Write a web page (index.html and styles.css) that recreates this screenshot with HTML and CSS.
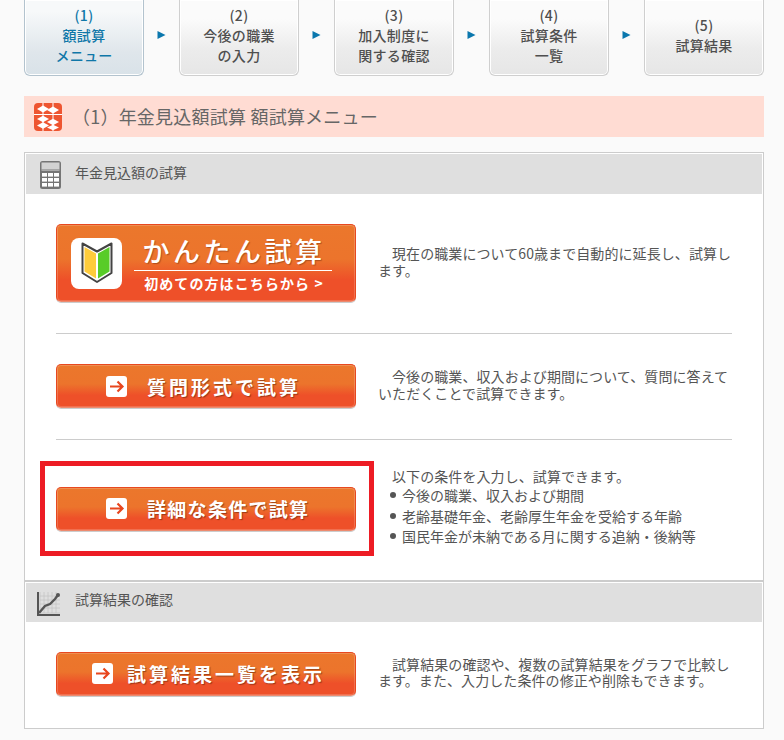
FILE: index.html
```html
<!DOCTYPE html>
<html lang="ja">
<head>
<meta charset="utf-8">
<title>年金見込額試算</title>
<link rel="stylesheet" href="styles.css">
</head>
<body>
<div class="page">
  <ol class="steps">
    <li class="step active"><span>(1)</span><span>額試算</span><span>メニュー</span></li>
    <li class="sep"><svg width="9" height="10" viewBox="0 0 9 10"><path d="M0.5 1 L8.5 5 L0.5 9 Z" fill="#0a77ad"/></svg></li>
    <li class="step"><span>(2)</span><span>今後の職業</span><span>の入力</span></li>
    <li class="sep"><svg width="9" height="10" viewBox="0 0 9 10"><path d="M0.5 1 L8.5 5 L0.5 9 Z" fill="#0a77ad"/></svg></li>
    <li class="step"><span>(3)</span><span>加入制度に</span><span>関する確認</span></li>
    <li class="sep"><svg width="9" height="10" viewBox="0 0 9 10"><path d="M0.5 1 L8.5 5 L0.5 9 Z" fill="#0a77ad"/></svg></li>
    <li class="step"><span>(4)</span><span>試算条件</span><span>一覧</span></li>
    <li class="sep"><svg width="9" height="10" viewBox="0 0 9 10"><path d="M0.5 1 L8.5 5 L0.5 9 Z" fill="#0a77ad"/></svg></li>
    <li class="step"><span>(5)</span><span>試算結果</span></li>
  </ol>

  <h1 class="title">
    <svg class="title-icon" width="28" height="28" viewBox="0 0 28 28">
      <rect width="28" height="28" rx="4" fill="#ee5530"/>
      <path d="M0 11.5H28M9 0V28M19 0V28" stroke="#fff" stroke-width="1"/>
      <g fill="#fff">
        <path d="M3 6 L9 2.5 L15 6 L9 9.5Z"/>
        <path d="M13 7 L19 3.5 L25 7 L19 10.5Z"/>
        <path d="M3 16 L9 12.8 L15 16 L9 19.2Z"/>
        <path d="M3 22.5 L9 19.3 L15 22.5 L9 25.7Z"/>
        <path d="M13 19 L19 15.8 L25 19 L19 22.2Z"/>
        <path d="M13 24.5 L19 21.8 L25 24.5 L19 27.2Z"/>
      </g>
    </svg>
    <span>（1）年金見込額試算 額試算メニュー</span>
  </h1>

  <div class="card">
    <section class="section">
      <h2 class="head">
        <svg class="head-icon calc" width="21" height="28" viewBox="0 0 21 28">
          <rect x="0" y="0" width="21" height="28" rx="2.5" fill="#757575"/>
          <rect x="1.5" y="1.5" width="18" height="7" fill="#d2d2d2"/>
          <rect x="1.5" y="8.5" width="18" height="1.5" fill="#aaa"/>
          <g fill="#fff">
            <rect x="2" y="12" width="5" height="3.6"/><rect x="8" y="12" width="5" height="3.6"/><rect x="14" y="12" width="5" height="3.6"/>
            <rect x="2" y="17" width="5" height="3.6"/><rect x="8" y="17" width="5" height="3.6"/><rect x="14" y="17" width="5" height="3.6"/>
            <rect x="2" y="22" width="5" height="3.6"/><rect x="8" y="22" width="5" height="3.6"/><rect x="14" y="22" width="5" height="3.6"/>
          </g>
        </svg>
        <span>年金見込額の試算</span>
      </h2>
      <div class="rows">
        <div class="row">
          <a class="btn btn-easy">
            <span class="mark">
              <svg width="32" height="42" viewBox="0 0 32 42">
                <path d="M1.5 1.5 L16 9.5 L30.5 1.5 V31 L16 40 L1.5 31Z" fill="#fff" stroke="#444" stroke-width="2" stroke-linejoin="round"/>
                <path d="M3.5 5 L15 11.5 V36.5 L3.5 29.5Z" fill="#ffcc3c"/>
                <path d="M28.5 5 L17 11.5 V36.5 L28.5 29.5Z" fill="#58cc28"/>
              </svg>
            </span>
            <span class="easy-text">
              <span class="easy-main">かんたん試算</span>
              <span class="easy-sub">初めての方はこちらから &gt;</span>
            </span>
          </a>
          <p class="desc">現在の職業について60歳まで自動的に延長し、試算します。</p>
        </div>
        <hr class="rule">
        <div class="row">
          <a class="btn">
            <svg class="arrow" width="21" height="21" viewBox="0 0 21 21"><rect width="21" height="21" rx="3" fill="#fff"/><path d="M4 10.5H16.5M11.5 5.5 L16.5 10.5 L11.5 15.5" fill="none" stroke="#e8461e" stroke-width="2.2"/></svg>
            <span class="label l-question">質問形式で試算</span>
          </a>
          <p class="desc">今後の職業、収入および期間について、質問に答えていただくことで試算できます。</p>
        </div>
        <hr class="rule">
        <div class="row">
          <a class="btn">
            <svg class="arrow" width="21" height="21" viewBox="0 0 21 21"><rect width="21" height="21" rx="3" fill="#fff"/><path d="M4 10.5H16.5M11.5 5.5 L16.5 10.5 L11.5 15.5" fill="none" stroke="#e8461e" stroke-width="2.2"/></svg>
            <span class="label l-detail">詳細な条件で試算</span>
          </a>
          <div class="detail">
            <p class="desc desc-list">以下の条件を入力し、試算できます。</p>
            <ul class="list">
              <li>今後の職業、収入および期間</li>
              <li>老齢基礎年金、老齢厚生年金を受給する年齢</li>
              <li>国民年金が未納である月に関する追納・後納等</li>
            </ul>
          </div>
          <div class="frame"></div>
        </div>
      </div>
    </section>

    <section class="section second">
      <h2 class="head head-second">
        <svg class="head-icon chart" width="23" height="24" viewBox="0 0 23 24">
          <path d="M3 0V21H23M7 0V21M11 0V21M15 0V21M19 0V21M3 4H23M3 8H23M3 12H23M3 16H23" fill="none" stroke="#c4c4c4" stroke-width="0.8"/>
          <path d="M1 0V23H23" fill="none" stroke="#555" stroke-width="2"/>
          <path d="M2 21 L8 14 L13 12 L18 7 L21 3" fill="none" stroke="#555" stroke-width="2.4"/>
          <circle cx="21" cy="3" r="2" fill="#555"/>
        </svg>
        <span>試算結果の確認</span>
      </h2>
      <div class="rows rows-second">
        <div class="row">
          <a class="btn btn-list">
            <svg class="arrow" width="21" height="21" viewBox="0 0 21 21"><rect width="21" height="21" rx="3" fill="#fff"/><path d="M4 10.5H16.5M11.5 5.5 L16.5 10.5 L11.5 15.5" fill="none" stroke="#e8461e" stroke-width="2.2"/></svg>
            <span class="label l-list">試算結果一覧を表示</span>
          </a>
          <p class="desc">試算結果の確認や、複数の試算結果をグラフで比較します。また、入力した条件の修正や削除もできます。</p>
        </div>
      </div>
    </section>
  </div>
</div>
</body>
</html>
```
FILE: styles.css
```css
* { box-sizing: border-box; }
html, body { margin: 0; padding: 0; background: #fafafa; }
body {
  font-family: "Noto Sans CJK JP", "Noto Sans", sans-serif;
  color: #555;
  font-size: 14px;
  overflow: hidden;
}
.page { width: 740px; margin-left: 24px; }

.steps {
  list-style: none;
  margin: 0;
  padding: 0;
  display: flex;
  height: 76px;
}
.step {
  width: 120px;
  height: 76px;
  display: flex;
  flex-direction: column;
  align-items: center;
  justify-content: flex-end;
  padding-bottom: 10px;
  border: 1px solid #cfcfcf;
  border-top: 0;
  border-radius: 0 0 6px 6px;
  background: linear-gradient(#fbfbfb 25%, #ececec 65%, #e6e6e6);
  box-shadow: inset 0 0 0 1px #fff;
  font-weight: 500;
  font-size: 14px;
  line-height: 20px;
  color: #4f4f4f;
  letter-spacing: 0.3px;
}
.step:last-child { padding-bottom: 20px; }
.step.active {
  border-color: #b3c3ce;
  background: linear-gradient(#f7f9fa 15%, #dfe6eb 70%, #d9e2e8);
  color: #0f77a8;
}
.sep {
  width: 35px;
  padding-top: 30px;
  padding-left: 13px;
  line-height: 0;
}

.title {
  margin: 20px 0 15px;
  height: 41px;
  background: #ffdcd3;
  display: flex;
  align-items: center;
  padding-left: 10px;
  padding-bottom: 1px;
  font-size: 18px;
  font-weight: 400;
  color: #666;
  letter-spacing: 0.22px;
}
.title-icon { flex: none; margin-right: 10px; margin-top: 1px; }

.card {
  border: 1px solid #ccc;
  background: #fff;
  width: 740px;
}
.section { padding: 1px; }
.section.second { border-top: 2px solid #ccc; }
.head {
  margin: 0;
  height: 40px;
  background: #dfdfdf;
  display: flex;
  align-items: center;
  font-size: 14px;
  font-weight: 400;
  color: #555;
  position: relative;
  padding: 0 0 4px 49px;
}
.head-second { height: 39px; padding-bottom: 6px; }
.head-icon { position: absolute; }
.calc { left: 14px; top: 7px; }
.chart { left: 11px; top: 9px; }

.rows { padding: 30px 30px 31px; }
.rows-second { padding-bottom: 31px; }
.row {
  display: flex;
  align-items: center;
  position: relative;
  width: 676px;
}
.rule {
  margin: 31px 0 30px;
  border: 0;
  height: 1px;
  background: #ccc;
}

.btn {
  flex: none;
  width: 300px;
  height: 44px;
  border: 1px solid #e8481f;
  border-bottom-color: #ee8a6e;
  border-radius: 5px;
  background: linear-gradient(#eb772c 0%, #ec742c 45%, #ee5029 72%, #ee5029 100%);
  box-shadow: inset 0 0 0 1px rgba(255,255,255,.18), 0 1px 0 #ccc;
  display: flex;
  align-items: center;
  color: #fff;
  font-weight: 700;
  padding-left: 49px;
  position: relative;
}
.btn-list { padding-left: 35px; }
.arrow { flex: none; }
.label {
  font-size: 19px;
  white-space: nowrap;
  text-shadow: 1px 1px 1px rgba(90,30,10,.55);
}
.l-question { margin-left: 20px; letter-spacing: 3px; }
.l-detail { margin-left: 20px; letter-spacing: 1.3px; }
.l-list { margin-left: 14px; letter-spacing: 3px; }

.btn-easy { height: 78px; padding-left: 14px; }
.mark {
  flex: none;
  width: 51px;
  height: 51px;
  background: #fff;
  border-radius: 8px;
  display: flex;
  align-items: center;
  justify-content: center;
}
.easy-text {
  margin-left: 12px;
  width: 198px;
  display: flex;
  flex-direction: column;
  align-items: center;
}
.easy-main {
  width: 100%;
  text-align: center;
  font-size: 27px;
  line-height: 37px;
  letter-spacing: 3.5px;
  font-weight: 500;
  border-bottom: 1px solid #fff;
  padding: 0 0 1px 2px;
  text-shadow: 1px 1px 1px rgba(90,30,10,.4);
}
.easy-sub {
  font-size: 14px;
  line-height: 24px;
  letter-spacing: 1.1px;
  white-space: nowrap;
  margin-left: 2px;
}

.desc {
  margin: 0 0 0 22px;
  padding-bottom: 3px;
  text-indent: 14px;
  width: 354px;
  font-size: 14px;
  line-height: 16.5px;
  letter-spacing: 0.08px;
  color: #555;
}
.detail { margin: -4px 0 0 22px; width: 354px; }
.desc-list { margin: 0; padding-bottom: 0; line-height: 20px; }
.list {
  margin: -1px 0 1px;
  padding: 0 0 0 12px;
  line-height: 20.5px;
  list-style: none;
}
.list li { display: flex; align-items: center; }
.list li::before {
  content: "";
  flex: none;
  width: 6px;
  height: 6px;
  border-radius: 50%;
  background: #555;
  margin-right: 6px;
}
.frame {
  position: absolute;
  left: -16px;
  top: -9px;
  width: 334px;
  height: 95px;
  border: 5px solid #ed1c24;
  pointer-events: none;
}
```
